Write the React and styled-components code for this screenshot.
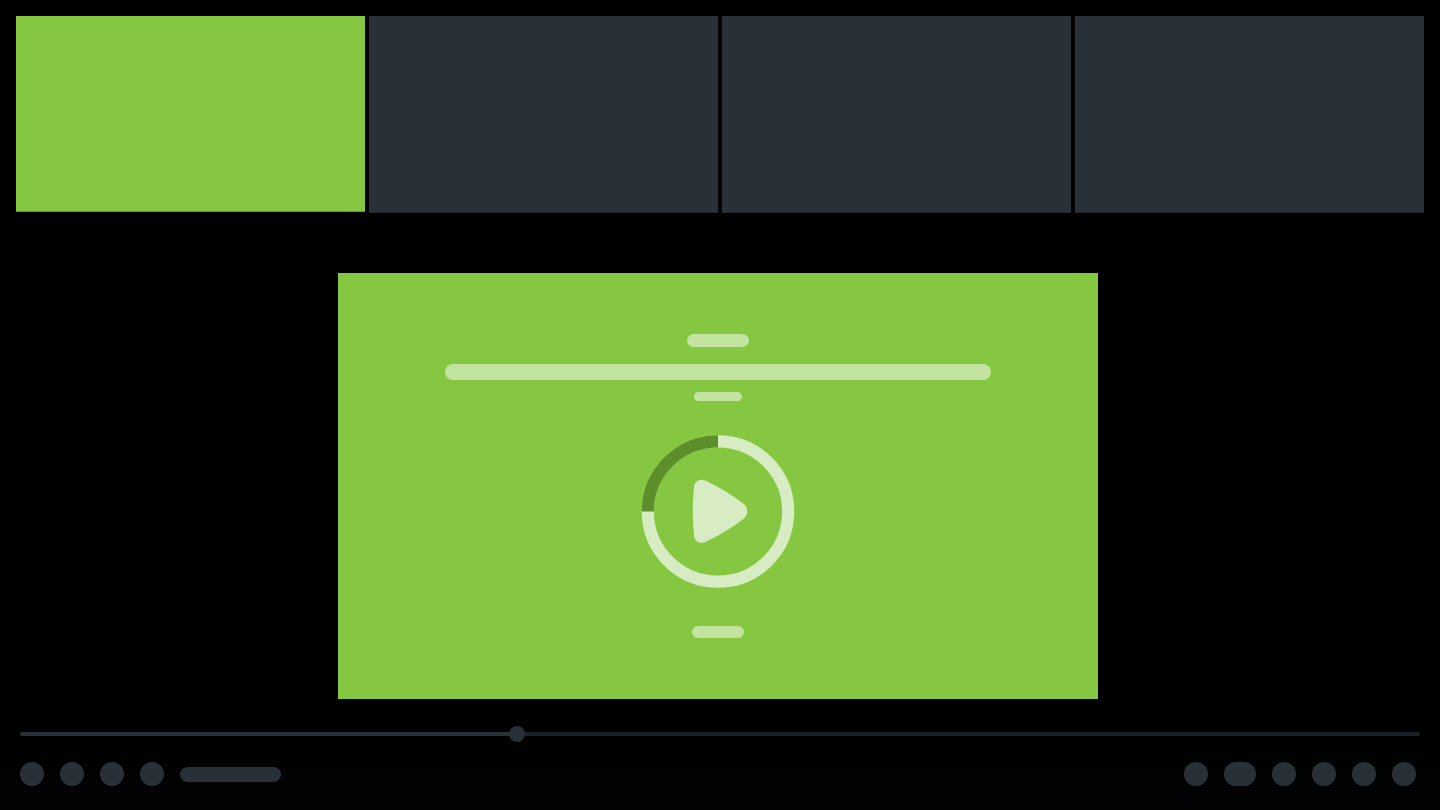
import { useState } from "react";
import styled, { createGlobalStyle } from "styled-components";

const GlobalStyle = createGlobalStyle`
  * {
    box-sizing: border-box;
  }

  body {
    margin: 0;
    background: #000;
    font-family: "Liberation Sans", Arial, sans-serif;
  }
`;

const Player = styled.div`
  display: flex;
  flex-direction: column;
  min-height: 100vh;
`;

const Strip = styled.nav`
  display: grid;
  grid-template-columns: repeat(4, 1fr);
  align-items: start;
  gap: 4px;
  padding: 16px 16px 0;
`;

const Thumbnail = styled.button`
  width: 100%;
  aspect-ratio: ${(props) => (props.$active ? "16 / 9" : "39 / 22")};
  padding: 0;
  border: 0;
  border-bottom: 1px solid ${(props) => (props.$active ? "#659732" : "#20262d")};
  background: ${(props) => (props.$active ? "#86c742" : "#283038")};
  cursor: pointer;
`;

const Stage = styled.main`
  display: flex;
  flex: 1;
  justify-content: center;
  align-items: flex-start;
  padding: 60px 4px 27px 0;
`;

const UpNext = styled.section`
  display: flex;
  flex-direction: column;
  align-items: center;
  width: 100%;
  max-width: 760px;
  padding: 61px 16px;
  background: #86c742;
`;

const Line = styled.div`
  width: ${(props) => props.$width}px;
  max-width: 100%;
  height: ${(props) => props.$height}px;
  border-radius: 8px;
  background: #c3e3a1;
`;

const Heading = styled.div`
  display: flex;
  flex-direction: column;
  align-items: center;
  width: 100%;
  gap: 12px;
  padding: 17px 0 33px;
`;

const PlayButton = styled.button`
  display: block;
  width: 154px;
  height: 154px;
  margin-bottom: 38px;
  padding: 0;
  border: 0;
  background: none;
  cursor: pointer;

  svg {
    display: block;
  }
`;

const Footer = styled.footer`
  padding: 0 20px 24px;
  background: linear-gradient(#000, #020304);
`;

const Timeline = styled.input`
  display: block;
  appearance: none;
  width: 100%;
  height: 16px;
  margin: 0 0 20px;
  background: none;
  cursor: pointer;

  &::-webkit-slider-runnable-track {
    height: 4px;
    border-radius: 2px;
    background: linear-gradient(
      to right,
      #283038 var(--played),
      #192027 var(--played)
    );
  }

  &::-webkit-slider-thumb {
    appearance: none;
    width: 16px;
    height: 16px;
    margin-top: -6px;
    border-radius: 50%;
    background: #283038;
  }
`;

const Controls = styled.div`
  display: flex;
  justify-content: space-between;
  padding-right: 4px;
`;

const Group = styled.div`
  display: flex;
  align-items: center;
  gap: 16px;
`;

const Control = styled.button`
  width: ${(props) => (props.$wide ? 32 : 24)}px;
  height: 24px;
  padding: 0;
  border: 0;
  border-radius: 12px;
  background: #283038;
  cursor: pointer;
`;

const Time = styled.div`
  width: 101px;
  height: 15px;
  border-radius: 8px;
  background: #283038;
`;

const leftControls = ["Play", "Rewind", "Forward", "Volume"];

const rightControls = [
  { label: "Captions" },
  { label: "Quality", wide: true },
  { label: "Settings" },
  { label: "Share" },
  { label: "Picture in picture" },
  { label: "Fullscreen" },
];

const PlayIcon = () => (
  <svg width="154" height="154" viewBox="0 0 154 154" aria-hidden="true">
    <circle cx="77" cy="77.5" r="70.2" fill="none" stroke="#d7ecc2" strokeWidth="12.2" />
    <path d="M6.8 77.5A70.2 70.2 0 0 1 77 7.3" fill="none" stroke="#5c8f29" strokeWidth="12.2" />
    <path
      d="M53 53.3C53.4 48.6 56.6 45.8 60.6 45.8C62.6 45.8 64.4 46.6 66.3 47.6C79 53.6 91 61 102.3 69.6C105 71.8 106.2 74.3 106.2 77.3C106.2 80.3 105 82.8 102.3 85C91 93.6 79 101 66.3 107C64.4 108 62.6 109 60.6 109C56.6 109 53.4 106 53 101.3C51.3 85 51.3 69 53 53.3Z"
      fill="#d7ecc2"
    />
  </svg>
);

const App = () => {
  const [active, setActive] = useState(0);
  const [position, setPosition] = useState(353);

  return (
    <>
      <GlobalStyle />
      <Player>
        <Strip aria-label="Playlist">
          {[0, 1, 2, 3].map((item) => (
            <Thumbnail
              key={item}
              type="button"
              aria-label={`Video ${item + 1}`}
              $active={item === active}
              onClick={() => setActive(item)}
            />
          ))}
        </Strip>
        <Stage>
          <UpNext>
            <Line $width={62} $height={13} />
            <Heading>
              <Line $width={546} $height={16} />
              <Line $width={48} $height={9} />
            </Heading>
            <PlayButton type="button" aria-label="Play next">
              <PlayIcon />
            </PlayButton>
            <Line $width={52} $height={12} />
          </UpNext>
        </Stage>
        <Footer>
          <Timeline
            type="range"
            aria-label="Seek"
            min="0"
            max="1000"
            value={position}
            onChange={(e) => setPosition(Number(e.target.value))}
            style={{ "--played": `${position / 10}%` }}
          />
          <Controls>
            <Group>
              {leftControls.map((label) => (
                <Control key={label} type="button" aria-label={label} />
              ))}
              <Time />
            </Group>
            <Group>
              {rightControls.map(({ label, wide }) => (
                <Control key={label} type="button" aria-label={label} $wide={wide} />
              ))}
            </Group>
          </Controls>
        </Footer>
      </Player>
    </>
  );
};

export default App;
